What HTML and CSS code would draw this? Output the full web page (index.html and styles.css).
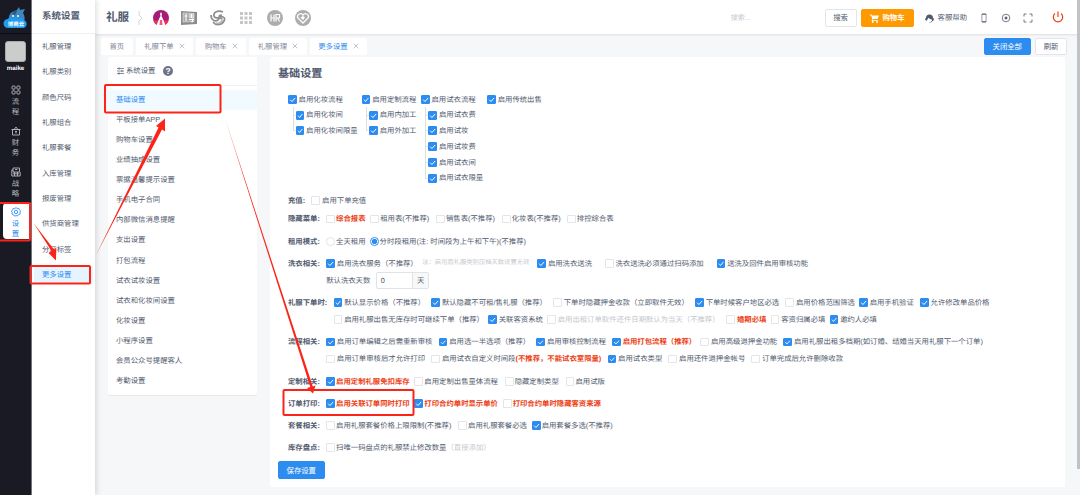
FILE: index.html
```html
<!DOCTYPE html>
<html lang="zh-CN">
<head>
    <meta charset="UTF-8">
    <title>系统设置</title>
    <link rel="stylesheet" href="styles.css">
</head>
<body>
<div class="app">
    <!-- 一级导航 -->
    <nav class="rail">
        <div class="logo">
            <svg width="26" height="24" viewBox="0 0 26 24">
                <path d="M6 15C5 9 8 5 13 5l3-4 1 3 5-1-2 4c2 3 2 6 1 9z" fill="#3f86bd"/>
                <path d="M9 8l3-4 2 1-2 4z" fill="#28597f"/>
                <circle cx="10" cy="10" r="1" fill="#fff"/><circle cx="15" cy="10" r="1" fill="#fff"/>
                <path d="M5 22a4.500 4.500 0 010-9c1-2 4-2 5-1 2-1 5-1 6 1 2-1 4-1 5 1a4.300 4.300 0 010 8z" fill="#1e9cf0"/>
                <text x="13" y="19.500" class="logo-text" text-anchor="middle">博商云</text>
            </svg>
        </div>
        <div class="avatar"></div>
        <div class="user">maike</div>
        <div class="rail-item">
            <svg width="10" height="10" viewBox="0 0 10 10" class="line"><rect x="1" y="1" width="3.200" height="3.200" rx="1"/><rect x="5.800" y="1" width="3.200" height="3.200" rx="1"/><rect x="1" y="5.800" width="3.200" height="3.200" rx="1"/><rect x="5.800" y="5.800" width="3.200" height="3.200" rx="1"/></svg>
            <span>流</span><span>程</span>
        </div>
        <div class="rail-item">
            <svg width="10" height="10" viewBox="0 0 10 10" class="line"><path d="M1.500 3.500h7v5.500h-7zM.5 3.500h9M3.500 3L5 1l1.500 2M5 5v2.500M4 5.500h2"/></svg>
            <span>财</span><span>务</span>
        </div>
        <div class="rail-item">
            <svg width="10" height="10" viewBox="0 0 10 10" class="line"><path d="M2 1h6.500v4H2zM2 3H.8v6h8.400V5M3.500 5v4M6.500 5v4M2 6.800h6M4 2.500h2.500"/></svg>
            <span>战</span><span>略</span>
        </div>
        <div class="rail-item active">
            <svg width="10" height="10" viewBox="0 0 10 10" class="line"><path d="M5 .6l1.300.9 1.600-.1.500 1.500 1.200 1L9 5.400l.2 1.600-1.500.5-1 1.300L5 8.700l-1.600.4-.9-1.400L1 7l.2-1.600L.4 4l1.300-1 .5-1.500 1.500.1z"/><circle cx="5" cy="5" r="1.700"/></svg>
            <span>设</span><span>置</span>
        </div>
    </nav>

    <!-- 二级导航 -->
    <aside class="menu">
        <div class="menu-title">系统设置</div>
        <ul>
            <li>礼服管理</li>
            <li>礼服类别</li>
            <li>颜色尺码</li>
            <li>礼服组合</li>
            <li>礼服套餐</li>
            <li>入库管理</li>
            <li>报废管理</li>
            <li>供货商管理</li>
            <li>分区标签</li>
            <li class="active">更多设置</li>
        </ul>
    </aside>

    <div class="page">
        <header class="header">
            <span class="brand">礼服</span>
            <svg class="chevron" width="6" height="16" viewBox="0 0 6 16"><path d="M1 1v4l3 3-3 3v4" fill="none" stroke="#d3d5da"/></svg>
            <div class="apps">
                <svg width="16" height="16" viewBox="0 0 16 16"><circle cx="8" cy="8" r="8" fill="#a71b78"/><path d="M.4 10.500h15.200A8 8 0 01.4 10.500z" fill="#f03050"/><path d="M8 2l1 2-.5 2 1.500 3 2.500 6.200a8 8 0 01-9 0L6 9l1.500-3L7 4z" fill="#fff"/><path d="M7 10h2l.5 5h-3z" fill="#ef5a84"/></svg>
                <svg width="16" height="16" viewBox="0 0 16 16"><path d="M0 1l16 1v12L0 15z" fill="#8c8c8c"/><path d="M2 3l11 .5v8L2 12z" fill="#a9a9a9" stroke="#eee" stroke-width=".6"/><path d="M5 4v7M3.500 6h3M8 5h5M8 7h5M10.500 4v4M8 9.500h5M11.500 8.500V12l-1.500-.5" stroke="#fff" fill="none"/></svg>
                <svg width="16" height="16" viewBox="0 0 16 16" fill="none" stroke="#8d8d8d" stroke-width="1.700"><path d="M13 2C8 0 3 2 4 6s6 0 8 3M1 5c0 5 4 7 7 5s-1-5 4-5M3 12c3 4 9 3 11-1s-2-5-5-4"/><path d="M6 13c4 1 6-1 6-4" stroke="#b5b5b5"/></svg>
                <svg width="16" height="16" viewBox="0 0 16 16" fill="#c5c5c5"><path d="M2 2h3v3H2zM6.500 2h3v3h-3zM11 2h3v3h-3zM2 6.500h3v3H2zM6.500 6.500h3v3h-3zM11 6.500h3v3h-3zM2 11h3v3H2zM6.500 11h3v3h-3zM11 11h3v3h-3z"/></svg>
                <svg width="16" height="16" viewBox="0 0 16 16"><circle cx="8" cy="8" r="8" fill="#adadad"/><path d="M4 4.500v7M4 8h3M7 4.500v7M9 11.500v-7h3.500V8H9.500M10.500 8l2 3.500" fill="none" stroke="#fff" stroke-width="1.200"/></svg>
                <svg width="16" height="16" viewBox="0 0 16 16"><circle cx="8" cy="8" r="8" fill="#adadad"/><path d="M8 13L2.500 7.500C2 4 6 2.500 8 5c2-2.500 6-1 5.500 2.500z" fill="none" stroke="#fff" stroke-width="1.300"/><path d="M8 10L5.500 7.500 8 6l2 1.500z" fill="#fff"/></svg>
            </div>
            <span class="search">搜索...</span>
            <button class="btn">搜索</button>
            <button class="btn cart">
                <svg width="9" height="9" viewBox="0 0 9 9"><path d="M0 .5h1.600l.5 1H9L7.500 5H3l-.4.900H8v.9H1.500L2.300 4.700 1.100 1.400H0z" fill="#fff"/><circle cx="2.700" cy="8" r=".9" fill="#fff"/><circle cx="7" cy="8" r=".9" fill="#fff"/></svg>
                购物车
            </button>
            <span class="help">
                <svg width="9" height="9" viewBox="0 0 9 9"><path d="M1 4a3.500 3.500 0 017 0l.8.500v1.800L7.500 7C7 8.500 5 9 4 8.500c2 0 3-1 3-3C5 5.500 4 4.500 3.500 3.800 3 5 2 5.500 2 6.800L.2 6V4.500z" fill="#515a6e"/></svg>
                客服帮助
            </span>
            <div class="tools">
                <svg width="10" height="10" viewBox="0 0 10 10"><path d="M3 1.200h4M3 8.800h4" stroke-width="1.200"/><path d="M2.900 1v8M7.100 1v8" stroke-width=".6"/></svg>
                <svg width="10" height="10" viewBox="0 0 10 10"><circle cx="5" cy="5" r="3.800"/><circle cx="5" cy="5" r="1.100" fill="#515a6e"/></svg>
                <svg width="10" height="10" viewBox="0 0 10 10"><path d="M1 3.500V1h2.500M6.500 1H9v2.500M9 6.500V9H6.500M3.500 9H1V6.500"/></svg>
            </div>
            <svg class="power" width="12" height="12" viewBox="0 0 12 12"><path d="M3 2.500a4.700 4.700 0 106 0M6 .5v5.500"/></svg>
        </header>

        <div class="tabs">
            <div class="tab">首页</div>
            <div class="tab">礼服下单<svg class="close" width="6" height="6" viewBox="0 0 6 6"><path d="M.7.7l4.600 4.600M5.300.7L.7 5.300"/></svg></div>
            <div class="tab">购物车<svg class="close" width="6" height="6" viewBox="0 0 6 6"><path d="M.7.7l4.600 4.600M5.300.7L.7 5.300"/></svg></div>
            <div class="tab">礼服管理<svg class="close" width="6" height="6" viewBox="0 0 6 6"><path d="M.7.7l4.600 4.600M5.300.7L.7 5.300"/></svg></div>
            <div class="tab active">更多设置<svg class="close" width="6" height="6" viewBox="0 0 6 6"><path d="M.7.7l4.600 4.600M5.300.7L.7 5.300"/></svg></div>
            <button class="btn primary close-all">关闭全部</button>
            <button class="btn">刷新</button>
        </div>

        <div class="content">
            <section class="side">
                <div class="side-title">
                    <svg width="7" height="8" viewBox="0 0 7 8"><path d="M0 1.500h7M0 4h7M0 6.500h7M2 .3v2.400M5 2.800v2.400M2 5.300v2.400" fill="none" stroke="#515a6e" stroke-width=".7"/></svg>
                    系统设置 <b>?</b>
                </div>
                <ul>
                    <li class="active">基础设置</li>
                    <li>平板接单APP</li>
                    <li>购物车设置</li>
                    <li>业绩抽成设置</li>
                    <li>票据温馨提示设置</li>
                    <li>手机电子合同</li>
                    <li>内部微信消息提醒</li>
                    <li>支出设置</li>
                    <li>打包流程</li>
                    <li>试衣试妆设置</li>
                    <li>试衣和化妆间设置</li>
                    <li>化妆设置</li>
                    <li>小程序设置</li>
                    <li>会员公众号提醒客人</li>
                    <li>考勤设置</li>
                </ul>
            </section>

            <section class="main">
                <h1>基础设置</h1>

                <div class="tree">
                    <div class="branch b1">
                        <label class="ck on">启用化妆流程</label>
                        <div class="kids">
                            <label class="ck on">启用化妆间</label>
                            <label class="ck on">启用化妆间限量</label>
                        </div>
                    </div>
                    <div class="branch b2">
                        <label class="ck on">启用定制流程</label>
                        <div class="kids">
                            <label class="ck on">启用内加工</label>
                            <label class="ck on">启用外加工</label>
                        </div>
                    </div>
                    <div class="branch b3">
                        <label class="ck on">启用试衣流程</label>
                        <div class="kids">
                            <label class="ck on">启用试衣费</label>
                            <label class="ck on">启用试妆</label>
                            <label class="ck on">启用试妆费</label>
                            <label class="ck on">启用试衣间</label>
                            <label class="ck on">启用试衣限量</label>
                        </div>
                    </div>
                    <div class="branch">
                        <label class="ck on">启用传统出售</label>
                    </div>
                </div>

                <div class="item first">
                    <div class="name">充值:</div>
                    <div class="rows">
                        <div class="row"><label class="ck">启用下单充值</label></div>
                    </div>
                </div>

                <div class="item">
                    <div class="name">隐藏菜单:</div>
                    <div class="rows">
                        <div class="row tight">
                            <label class="ck red">综合报表</label>
                            <label class="ck g5">租用表(不推荐)</label>
                            <label class="ck g7">销售表(不推荐)</label>
                            <label class="ck g7">化妆表(不推荐)</label>
                            <label class="ck">排控综合表</label>
                        </div>
                    </div>
                </div>

                <div class="item">
                    <div class="name">租用模式:</div>
                    <div class="rows">
                        <div class="row tight">
                            <label class="ck radio">全天租用</label>
                            <label class="ck radio on g4">分时段租用(注: 时间段为上午和下午)(不推荐)</label>
                        </div>
                    </div>
                </div>

                <div class="item">
                    <div class="name">洗衣相关:</div>
                    <div class="rows">
                        <div class="row">
                            <label class="ck on">启用洗衣服务（不推荐）</label>
                            <span class="note">注：启用后礼服类别压档天数设置无效</span>
                            <label class="ck on g8">启用洗衣送洗</label>
                            <label class="ck g13">洗衣送洗必须通过扫码添加</label>
                            <label class="ck on g13">送洗及回件启用审核功能</label>
                        </div>
                        <div class="row">
                            默认洗衣天数
                            <div class="num"><span>0</span><em>天</em></div>
                        </div>
                    </div>
                </div>

                <div class="item">
                    <div class="name">礼服下单时:</div>
                    <div class="rows">
                        <div class="row">
                            <label class="ck on">默认显示价格（不推荐）</label>
                            <label class="ck on">默认隐藏不可租/售礼服（推荐）</label>
                            <label class="ck">下单时隐藏押金收款（立即取件无效）</label>
                            <label class="ck on">下单时候客户地区必选</label>
                            <label class="ck">启用价格范围筛选</label>
                            <label class="ck on g4">启用手机验证</label>
                            <label class="ck on">允许修改单品价格</label>
                        </div>
                        <div class="row">
                            <label class="ck">启用礼服出售无库存时可继续下单（推荐）</label>
                            <label class="ck on g4">关联客资系统</label>
                            <label class="ck disabled g4">启用出租订单取件还件日期默认为当天（不推荐）</label>
                            <label class="ck red g7">婚期必填</label>
                            <label class="ck g4">客资归属必填</label>
                            <label class="ck on g4">邀约人必填</label>
                        </div>
                    </div>
                </div>

                <div class="item">
                    <div class="name">流程相关:</div>
                    <div class="rows">
                        <div class="row">
                            <label class="ck on">启用订单编辑之后需重新审核</label>
                            <label class="ck on">启用选一半选项（推荐）</label>
                            <label class="ck on">启用审核控制流程</label>
                            <label class="ck on red">启用打包流程（推荐）</label>
                            <label class="ck g4">启用高级退押金功能</label>
                            <label class="ck on">启用礼服出租多档期(如订婚、结婚当天用礼服下一个订单)</label>
                        </div>
                        <div class="row">
                            <label class="ck">启用订单审核后才允许打印</label>
                            <label class="ck">启用试衣自定义时间段<span class="red">(不推荐，不能试衣室限量)</span></label>
                            <label class="ck on">启用试衣类型</label>
                            <label class="ck">启用还件退押金帐号</label>
                            <label class="ck">订单完成后允许删除收款</label>
                        </div>
                    </div>
                </div>

                <div class="item">
                    <div class="name">定制相关:</div>
                    <div class="rows">
                        <div class="row tight">
                            <label class="ck on red">启用定制礼服免扣库存</label>
                            <label class="ck g5">启用定制出售量体流程</label>
                            <label class="ck g7">隐藏定制类型</label>
                            <label class="ck g7">启用试版</label>
                        </div>
                    </div>
                </div>

                <div class="item">
                    <div class="name">订单打印:</div>
                    <div class="rows">
                        <div class="row tight">
                            <label class="ck on red">启用关联订单同时打印</label>
                            <label class="ck on red g5">打印合约单时显示单价</label>
                            <label class="ck red g5">打印合约单时隐藏客资来源</label>
                        </div>
                    </div>
                </div>

                <div class="item">
                    <div class="name">套餐相关:</div>
                    <div class="rows">
                        <div class="row tight">
                            <label class="ck">启用礼服套餐价格上限限制(不推荐)</label>
                            <label class="ck g7">启用礼服套餐必选</label>
                            <label class="ck on g5">启用套餐多选(不推荐)</label>
                        </div>
                    </div>
                </div>

                <div class="item">
                    <div class="name">库存盘点:</div>
                    <div class="rows">
                        <div class="row tight">
                            <label class="ck">扫唯一码盘点的礼服禁止修改数量<span class="muted">（直接添加）</span></label>
                        </div>
                    </div>
                </div>

                <button class="btn primary save">保存设置</button>
            </section>
        </div>
    </div>
    <div class="scrollbar"></div>
</div>

<!-- 操作指引标注 -->
<svg class="guide" width="1080" height="495" viewBox="0 0 1080 495">
    <g fill="none" stroke="#fc2418" stroke-width="2">
        <rect x="-2" y="203" width="32" height="37.500" rx="1"/>
        <rect x="30.500" y="266" width="59.500" height="17.500" rx="1"/>
        <rect x="105" y="85" width="115.500" height="27.500" rx="1"/>
        <rect x="283.500" y="390" width="130" height="25" rx="1"/>
    </g>
    <g fill="#fc2418">
        <path d="M33.500 223L51.500 251 48.500 253 56 260.500 56.300 247.500 54 249.500z"/>
        <path d="M96 255L158.500 127.500 156 126 165 118.500 165 131.500 162 129.500z"/>
        <path d="M225.500 120L310.300 387 307 388 313 393.500 315.500 385.500 312.800 386.500z"/>
    </g>
</svg>
</body>
</html>
```
FILE: styles.css
```css
*,
*::before {
    box-sizing: border-box;
}

body {
    margin: 0;
    background: #f5f7f9;
    color: #515a6e;
    font-family: "Liberation Sans", "Noto Sans CJK SC", sans-serif;
    font-size: 7.37px;
    line-height: 1;
    text-rendering: geometricPrecision;
    white-space: nowrap;
    overflow: hidden;
}

ul {
    list-style: none;
    margin: 0;
    padding: 0;
}

svg {
    display: block;
    flex: none;
}

.app {
    display: flex;
    width: 1080px;
    height: 495px;
}

/* 一级导航 */
.rail {
    display: flex;
    flex-direction: column;
    align-items: center;
    width: 32px;
    background: #191a23;
    border-right: 1px solid #77787e;
    color: #b9bac0;
}

.logo {
    width: 100%;
    height: 34px;
    padding: 6px 0 0 3px;
    border-bottom: 1px solid #0b0b11;
}

.logo-text {
    font-size: 5.5px;
    font-weight: bold;
    fill: #fff;
}

.avatar {
    width: 21px;
    height: 21px;
    margin-top: 7px;
    border: 1px solid #aaa;
    border-radius: 3px;
    background: #ccc;
}

.user {
    margin: 4px 0 12px;
    color: #fff;
    font-size: 6.2px;
    font-weight: bold;
}

.rail-item {
    display: flex;
    flex-direction: column;
    align-items: center;
    width: 28px;
    height: 36px;
    margin-bottom: 5px;
    line-height: 9.3px;
}

.rail-item svg {
    margin: 1px 0 2px;
}

.rail-item.active {
    align-self: flex-end;
    height: 36px;
    margin-top: -4px;
    padding: 3px 3px 0 0;
    border-radius: 4px 0 0 4px;
    background: #fff;
    color: #2d8cf0;
}

.line {
    fill: none;
    stroke: currentColor;
    stroke-width: .9;
}

/* 二级导航 */
.menu {
    position: relative;
    width: 63px;
    background: #fff;
    box-shadow: 2px 0 5px rgba(0, 0, 0, .12);
}

.menu-title {
    height: 34px;
    padding-left: 10px;
    border-bottom: 1px solid #eff0f2;
    font-size: 9.5px;
    font-weight: bold;
    line-height: 34px;
}

.menu ul {
    display: flex;
    flex-direction: column;
    gap: 7.3px;
    padding: 4.2px 2px 0;
}

.menu li {
    height: 18px;
    padding-left: 8px;
    line-height: 18px;
}

.menu li.active {
    background: #e6f4ff;
    color: #2d8cf0;
}

/* 顶栏 */
.page {
    display: flex;
    flex-direction: column;
    flex: 1;
    min-width: 0;
}

.header {
    display: flex;
    align-items: center;
    height: 34px;
    padding: 2px 13px 0 11px;
    background: #fff;
    box-shadow: 0 1px 2px rgba(0, 21, 41, .1);
}

.brand {
    width: 32px;
    font-size: 11.6px;
    font-weight: bold;
}

.apps {
    display: flex;
    gap: 12.4px;
    margin-left: 9px;
}

.search {
    margin-left: auto;
    margin-right: 74px;
    color: #c5c8ce;
    font-size: 7px;
}

.btn {
    display: flex;
    align-items: center;
    justify-content: center;
    width: 32px;
    height: 17.5px;
    padding: 0;
    border: 1px solid #e3e5e9;
    border-radius: 2px;
    background: #fff;
    color: #515a6e;
    font: inherit;
}

.btn.primary {
    width: 46.5px;
    border-color: #2d8cf0;
    background: #2d8cf0;
    color: #fff;
}

.btn.cart {
    gap: 4px;
    width: 53px;
    margin-left: 4px;
    border-color: #f90;
    background: #f90;
    color: #fff;
    font-weight: bold;
}

.help {
    display: flex;
    align-items: center;
    gap: 4px;
    margin-left: 11px;
}

.tools {
    display: flex;
    gap: 12px;
    margin-left: 12px;
    fill: none;
    stroke: #515a6e;
    stroke-width: .8;
}

.power {
    margin: -2px 0 0 19px;
    fill: none;
    stroke: #ed4014;
    stroke-width: 1.2;
}

/* 标签页 */
.tabs {
    display: flex;
    gap: 3px;
    height: 23px;
    padding: 3.5px 10px 2px 6px;
}

.tab {
    display: flex;
    align-items: center;
    gap: 5px;
    height: 17.5px;
    padding: 0 8.5px;
    border-radius: 2px;
    background: #fff;
    color: #808695;
}

.tab.active {
    color: #2d8cf0;
}

.close {
    fill: none;
    stroke: #a5a9b2;
    stroke-width: .7;
}

.close-all {
    margin-left: auto;
    margin-right: 1.5px;
}

/* 内容区 */
.content {
    display: flex;
    align-items: flex-start;
    gap: 13px;
    padding-left: 12.5px;
}

.side {
    width: 149px;
    height: 338px;
    border-radius: 2px;
    background: #fff;
    box-shadow: 0 1px 1px rgba(0, 0, 0, .06);
}

.side-title {
    display: flex;
    align-items: center;
    gap: 2.5px;
    height: 29px;
    margin-bottom: 4px;
    padding-left: 9px;
    border-bottom: 1px solid #eff0f2;
}

.side-title b {
    width: 10.5px;
    height: 10.5px;
    margin-left: 5px;
    border-radius: 50%;
    background: #6c7486;
    color: #fff;
    font-size: 8.5px;
    line-height: 10.5px;
    text-align: center;
}

.side li {
    height: 20.07px;
    padding-left: 8.5px;
    line-height: 20px;
}

.side li.active {
    background: #f0faff;
    color: #2d8cf0;
}

.main {
    width: 795px;
    height: 430px;
    padding: 11px 0 0 8.5px;
    border-radius: 2px;
    background: #fff;
}

.main h1 {
    height: 12px;
    margin: 0 0 11.5px;
    font-size: 11.1px;
    font-weight: bold;
    line-height: 12px;
}

/* 复选框 */
.ck {
    display: flex;
    align-items: center;
    height: 15.75px;
}

.ck::before {
    content: "";
    flex: none;
    width: 8.8px;
    height: 8.8px;
    margin-right: 1.8px;
    border: 1px solid #e3e5e9;
    border-radius: 1px;
    background: #fff;
}

.ck.on::before {
    border-color: #2d8cf0;
    background: #2d8cf0 url("data:image/svg+xml,%3Csvg xmlns='http://www.w3.org/2000/svg' viewBox='0 0 8 8'%3E%3Cpath d='M1.700 4l1.600 1.700 3-3.300' fill='none' stroke='%23fff' stroke-width='.9'/%3E%3C/svg%3E") center / 8px 8px no-repeat;
}

.ck.radio::before {
    border-radius: 50%;
}

.ck.radio.on::before {
    border-color: #2d8cf0;
    background: radial-gradient(circle, #2d8cf0 2.4px, #fff 3px);
}

.tree {
    display: flex;
    height: 94.5px;
    margin-bottom: 6.2px;
    padding-left: 10px;
}

.branch.b1 {
    width: 73.6px;
}

.branch.b2 {
    width: 59.3px;
}

.branch.b3 {
    width: 66.2px;
}

.kids {
    margin-left: 4.5px;
    background: linear-gradient(#dcdee2, #dcdee2) 0 0 / 1px calc(100% - 7.8px) no-repeat;
}

.kids .ck::before {
    margin-left: 3px;
}

.kids .ck {
    background: linear-gradient(#dcdee2, #dcdee2) 0 50% / 2.5px 1px no-repeat;
}

/* 设置项 */
.item {
    display: flex;
    margin-bottom: 5.1px;
    padding-left: 10px;
}

.item.first {
    margin-bottom: 1.2px;
}

.name {
    margin-right: 6.3px;
    font-weight: bold;
    line-height: 17.1px;
}

.row {
    display: flex;
    align-items: center;
    height: 17.1px;
}

.row .ck + .ck {
    margin-left: 6.2px;
}

.row .ck.g4 {
    margin-left: 4.2px;
}

.row .ck.g5 {
    margin-left: 4.8px;
}

.row .ck.g7 {
    margin-left: 6.8px;
}

.row .ck.g8 {
    margin-left: 8px;
}

.row .ck.g13 {
    margin-left: 12.8px;
}

.tight .ck::before {
    margin-right: 1.1px;
}

.red {
    color: #ed4014;
    font-weight: bold;
}

.disabled,
.muted {
    color: #c5c8ce;
}

.note {
    margin-left: 4.5px;
    color: #c5c8ce;
    font-size: 6.3px;
}

.num {
    display: flex;
    width: 52.5px;
    height: 17px;
    margin-left: 6px;
    border: 1px solid #e0e2e6;
    border-radius: 2px;
    line-height: 15px;
}

.num span {
    flex: 1;
    padding-left: 3.5px;
}

.num em {
    width: 15.5px;
    border-left: 1px solid #e0e2e6;
    background: #f8f8f9;
    font-style: normal;
    text-align: center;
}

.save {
    margin-top: .3px;
}

.scrollbar {
    width: 3px;
    height: 469px;
    background: #c1c1c8;
}

/* 标注层 */
.guide {
    position: absolute;
    top: 0;
    left: 0;
    pointer-events: none;
}
```
